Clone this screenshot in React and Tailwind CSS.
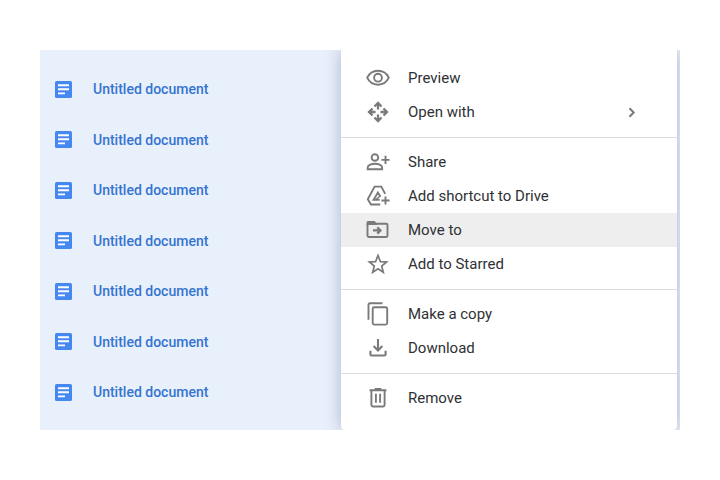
import React from 'react';

const DOCUMENTS = Array.from({ length: 7 }, (_, i) => ({ id: i + 1, name: 'Untitled document' }));

function Icon({ children }) {
  return (
    <svg
      className="w-6 h-6 shrink-0 overflow-visible"
      viewBox="0 0 24 24"
      fill="none"
      stroke="currentColor"
      strokeWidth="1.9"
      aria-hidden="true"
    >
      {children}
    </svg>
  );
}

const icons = {
  preview: (
    <Icon>
      <path d="M1.200 11.700C3.200 7.300 7.200 4.700 12 4.700s8.800 2.600 10.800 7c-2 4.400-6 7-10.800 7s-8.800-2.600-10.800-7z" />
      <circle cx="12" cy="11.700" r="3.900" />
    </Icon>
  ),
  openWith: (
    <Icon>
      <g strokeWidth="2.300">
        <path d="M8.500 6.500L12 3l3.500 3.500M12 3.500v6" />
        <path d="M8.500 17.500L12 21l3.500-3.500M12 20.500v-6" />
        <path d="M6.500 8.500L3 12l3.500 3.500M3.500 12h6" />
        <path d="M17.500 8.500L21 12l-3.500 3.500M20.500 12h-6" />
      </g>
    </Icon>
  ),
  share: (
    <Icon>
      <circle cx="8.900" cy="7.500" r="3.300" />
      <path d="M1.700 19.200v-1.700c0-2.500 4.200-3.800 7.200-3.800s7.200 1.300 7.200 3.800v1.700z" />
      <path d="M19.500 5.800v8.200M15.400 9.900h8.200" />
    </Icon>
  ),
  shortcut: (
    <Icon>
      <path d="M14.300 20.500H5L1.800 15.200 8.600 2.600h6.700l3.900 7.300" />
      <path d="M13.700 15.700H7.600l4.300-7.200 2.600 4.300" />
      <path d="M10.200 15.300l3.700-3" strokeWidth="1.400" />
      <path d="M19.500 12.400v8.200M15.400 16.500h8.200" />
    </Icon>
  ),
  move: (
    <Icon>
      <path d="M1.500 5.200v12.600c0 .7.500 1.200 1.200 1.200h17.600c.7 0 1.200-.5 1.200-1.200V7c0-.7-.5-1.200-1.200-1.200H2" />
      <path d="M.600 7V4.600c0-1 .7-1.700 1.700-1.700h6.300l2.600 2.900V7z" fill="currentColor" stroke="none" />
      <path d="M7 12.400h7M11.300 9.200l3.200 3.200-3.200 3.200" strokeWidth="2.200" />
    </Icon>
  ),
  star: (
    <Icon>
      <path d="M12 3.500l2.400 6.100 6.200.4-4.900 4 1.600 6.200-5.300-3.500-5.300 3.500 1.600-6.200-4.900-4 6.200-.4z" strokeWidth="1.700" />
    </Icon>
  ),
  copy: (
    <Icon>
      <path d="M2.500 17.700V2.700c0-.9.600-1.500 1.500-1.500h12.500" />
      <rect x="6.700" y="5.300" width="14.500" height="17.300" rx="1.500" />
    </Icon>
  ),
  download: (
    <Icon>
      <g strokeWidth="2.100">
        <path d="M12 3v11.200M7.600 10.100l4.400 4.400 4.400-4.400" />
        <path d="M4.400 14.700v3.600c0 .7.500 1.200 1.200 1.200h12.800c.7 0 1.200-.5 1.200-1.200v-3.600" />
      </g>
    </Icon>
  ),
  remove: (
    <Icon>
      <path d="M3.600 4.300h16.800M8.700 2.900h6.600" />
      <path d="M5.400 4.300v14.700c0 .9.600 1.500 1.500 1.500h10.200c.9 0 1.500-.6 1.500-1.500V4.300" />
      <path d="M9.900 7.800v9M14.100 7.800v9" />
    </Icon>
  ),
};

const MENU_GROUPS = [
  [
    { label: 'Preview', icon: icons.preview },
    { label: 'Open with', icon: icons.openWith, submenu: true },
  ],
  [
    { label: 'Share', icon: icons.share },
    { label: 'Add shortcut to Drive', icon: icons.shortcut },
    { label: 'Move to', icon: icons.move, active: true },
    { label: 'Add to Starred', icon: icons.star },
  ],
  [
    { label: 'Make a copy', icon: icons.copy },
    { label: 'Download', icon: icons.download },
  ],
  [{ label: 'Remove', icon: icons.remove }],
];

function DocumentRow({ doc }) {
  return (
    <li className="flex items-center h-5">
      <svg className="w-[17px] h-[17px] shrink-0" viewBox="0 0 17 17" aria-hidden="true">
        <rect width="17" height="17" rx="1.500" fill="#4688f1" />
        <path d="M3 4.200h11M3 8.300h11M3 12.400h7" stroke="#fff" strokeWidth="1.900" />
      </svg>
      <span className="ml-[21px] text-sm leading-5 font-medium text-[#3574d0] whitespace-nowrap">
        {doc.name}
      </span>
    </li>
  );
}

function MenuItem({ item }) {
  return (
    <button
      type="button"
      role="menuitem"
      className={`flex w-full h-[34px] items-center pl-[25px] pr-10 text-left text-[#2f3134] hover:bg-[#eeeeee] ${
        item.active ? 'bg-[#eeeeee]' : ''
      }`}
    >
      <span className="text-[#7a7a7a]">{item.icon}</span>
      <span className="ml-[18px] flex-1 text-[15px] leading-5 whitespace-nowrap">{item.label}</span>
      {item.submenu && (
        <svg
          className="w-[11px] h-[11px] text-[#7a7a7a]"
          viewBox="0 0 11 11"
          fill="none"
          stroke="currentColor"
          strokeWidth="2"
          aria-hidden="true"
        >
          <path d="M3.500 1.300l4.200 4.200-4.200 4.200" />
        </svg>
      )}
    </button>
  );
}

export default function App() {
  return (
    <main className="min-h-screen bg-white px-10 py-[50px] font-['Roboto',sans-serif]">
      <div className="flex overflow-hidden bg-[#e8f0fc]">
        {/* File list */}
        <ul className="flex flex-1 flex-col justify-between pl-[15px] pt-[29px] pb-7">
          {DOCUMENTS.map((doc) => (
            <DocumentRow key={doc.id} doc={doc} />
          ))}
        </ul>

        {/* Context menu */}
        <div
          role="menu"
          className="w-[336px] mr-[3px] shrink-0 rounded-b bg-white pt-[11px] pb-[15px] shadow-[0_0_16px_rgba(60,70,110,0.35)]"
        >
          {MENU_GROUPS.map((group, index) => (
            <React.Fragment key={group[0].label}>
              {index > 0 && <hr className="mt-2 mb-[7px] border-t border-[#dadce0]" />}
              {group.map((item) => (
                <MenuItem key={item.label} item={item} />
              ))}
            </React.Fragment>
          ))}
        </div>
      </div>
    </main>
  );
}
